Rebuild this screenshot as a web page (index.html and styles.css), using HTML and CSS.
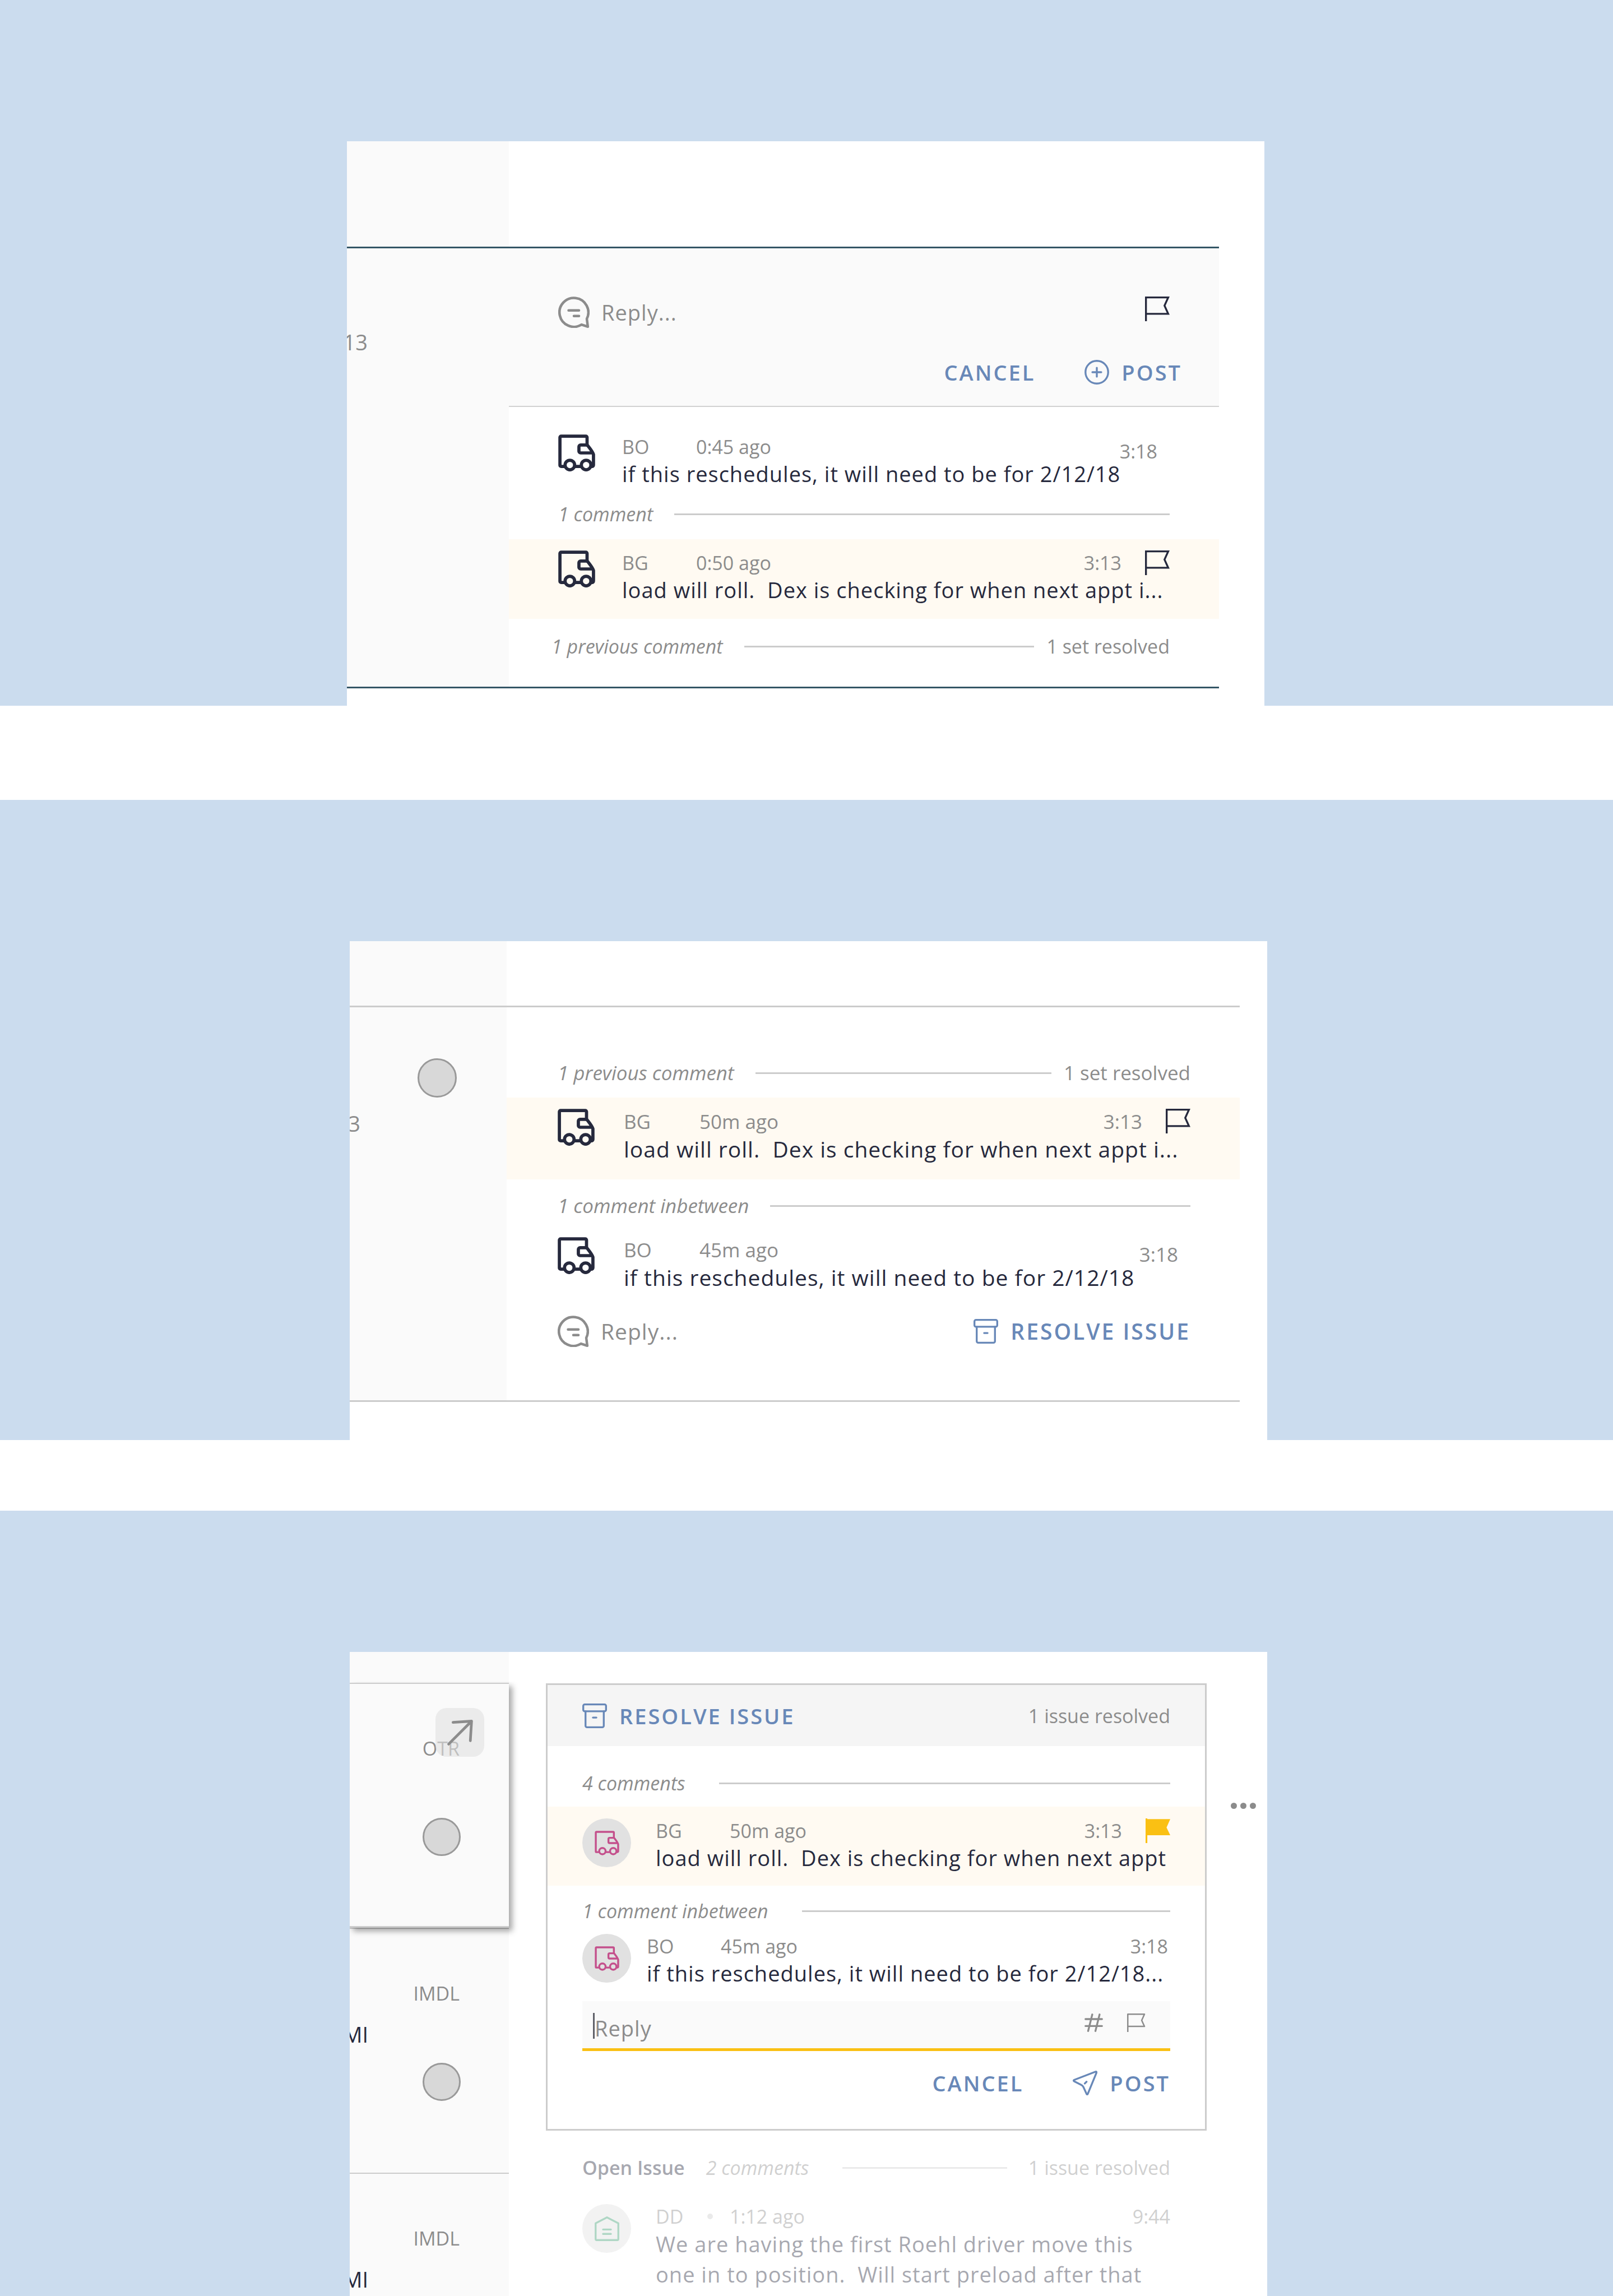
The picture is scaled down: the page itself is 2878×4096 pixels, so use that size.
FILE: index.html
```html
<!DOCTYPE html>
<html lang="en">
<head>
<meta charset="utf-8">
<meta name="viewport" content="width=device-width, initial-scale=1">
<title>Load comments</title>
<link rel="stylesheet" href="styles.css">
</head>
<body>

<svg class="sprite" aria-hidden="true">
  <symbol id="truck" viewBox="0 0 75 75">
    <path d="M11 65H6a2.5 2.5 0 0 1-2.500-2.500V6A2.500 2.500 0 0 1 6 3.500h50A2.500 2.500 0 0 1 58.500 6v16M36 65h8M59 21.500H45.500a3.500 3.500 0 0 0-3.500 3.500v9a3.500 3.500 0 0 0 3.500 3.500H70M59 21.500C63 27 69 33.500 71.500 40.500V62a3 3 0 0 1-3 3"/>
    <circle cx="23.600" cy="62" r="9.700"/><circle cx="56.600" cy="62" r="9.700"/>
  </symbol>
  <symbol id="flag" viewBox="0 0 50 50"><path d="M1.900 50V1.900H47L39.500 18.500 47 35H1.900"/></symbol>
  <symbol id="bubble" viewBox="0 0 62 62">
    <path d="M46 55.500A28.500 28.500 0 1 1 56.500 44L58.500 59.500Z"/>
    <path d="M20.500 27.500h20.500M31 38.500h10"/>
  </symbol>
  <symbol id="plus" viewBox="0 0 50 50"><circle cx="25" cy="25" r="23"/><path d="M25 16v18M16 25h18"/></symbol>
  <symbol id="archive" viewBox="0 0 50 50">
    <rect x="1.900" y="1.900" width="46.200" height="13.800" rx="3"/>
    <path d="M6.500 15.700v29.400a3 3 0 0 0 3 3h31a3 3 0 0 0 3-3V15.700M21.500 28.500h7"/>
  </symbol>
  <symbol id="hash" viewBox="0 0 38 38"><path d="M2 11.500h34M2 25.700h34M16 2 7.500 36M31 2 22.500 36"/></symbol>
  <symbol id="send" viewBox="0 0 50 50">
    <path d="M46.500 2 3 18.800q-2.500 1.400 0 2.800L17.500 29q3 1.500 4.200 4.200L28 47q1.300 2.400 2.600 0L48.200 4q.5-2.500-1.700-2ZM24.500 26l3.500-3.500"/>
  </symbol>
  <symbol id="house" viewBox="0 0 50 50"><path d="M25 2 48 14V46a2 2 0 0 1-2 2H4a2 2 0 0 1-2-2V14ZM17 26.500h16M17 35.500h16"/></symbol>
  <symbol id="arrow" viewBox="0 0 100 100"><path d="M27 74 74 27M36 29.500 74 27 71.500 67"/></symbol>
</svg>

<main class="page">

  <!-- Composing a reply -->
  <section class="stage stage--compose">
    <div class="card">
      <div class="card__head"><div class="card__gutter"></div></div>
      <article class="load load--active">
        <div class="load__side"><span class="clip clip--stop">13</span></div>
        <div class="load__main">
          <form class="compose">
            <div class="reply">
              <svg class="icon icon--bubble"><use href="#bubble"/></svg>
              <input class="reply__input" type="text" placeholder="Reply..." aria-label="Reply">
              <button class="icon-button" type="button" aria-label="Flag"><svg class="icon icon--flag"><use href="#flag"/></svg></button>
            </div>
            <div class="actions">
              <button class="action" type="button">CANCEL</button>
              <button class="action" type="submit"><svg class="icon icon--action"><use href="#plus"/></svg>POST</button>
            </div>
          </form>
          <div class="thread">
            <div class="comment">
              <svg class="icon icon--truck"><use href="#truck"/></svg>
              <div class="comment__body">
                <p class="meta"><span class="meta__who">BO</span><span>0:45 ago</span></p>
                <p class="text">if this reschedules, it will need to be for 2/12/18</p>
              </div>
              <time class="comment__time">3:18</time>
            </div>
            <div class="divider"><em>1 comment</em><hr class="rule"></div>
            <div class="comment comment--flagged">
              <svg class="icon icon--truck"><use href="#truck"/></svg>
              <div class="comment__body">
                <p class="meta"><span class="meta__who">BG</span><span>0:50 ago</span><time class="meta__time">3:13</time><svg class="icon icon--flag"><use href="#flag"/></svg></p>
                <p class="text">load will roll.  Dex is checking for when next appt i...</p>
              </div>
            </div>
            <div class="divider divider--summary"><em>1 previous comment</em><hr class="rule"><span>1 set resolved</span></div>
          </div>
        </div>
      </article>
    </div>
  </section>

  <!-- Collapsed thread with resolve action -->
  <section class="stage stage--thread">
    <div class="card">
      <div class="card__head"><div class="card__gutter"></div></div>
      <article class="load">
        <div class="load__side"><span class="dot"></span><span class="clip clip--digit">3</span></div>
        <div class="load__main">
          <div class="thread">
            <div class="divider"><em>1 previous comment</em><hr class="rule"><span>1 set resolved</span></div>
            <div class="comment comment--flagged">
              <svg class="icon icon--truck"><use href="#truck"/></svg>
              <div class="comment__body">
                <p class="meta"><span class="meta__who">BG</span><span>50m ago</span><time class="meta__time">3:13</time><svg class="icon icon--flag"><use href="#flag"/></svg></p>
                <p class="text">load will roll.  Dex is checking for when next appt i...</p>
              </div>
            </div>
            <div class="divider"><em>1 comment inbetween</em><hr class="rule"></div>
            <div class="comment">
              <svg class="icon icon--truck"><use href="#truck"/></svg>
              <div class="comment__body">
                <p class="meta"><span class="meta__who">BO</span><span>45m ago</span></p>
                <p class="text">if this reschedules, it will need to be for 2/12/18</p>
              </div>
              <time class="comment__time">3:18</time>
            </div>
            <div class="reply">
              <svg class="icon icon--bubble"><use href="#bubble"/></svg>
              <input class="reply__input" type="text" placeholder="Reply..." aria-label="Reply">
              <button class="action" type="button"><svg class="icon icon--action"><use href="#archive"/></svg>RESOLVE ISSUE</button>
            </div>
          </div>
        </div>
      </article>
    </div>
  </section>

  <!-- Selected load with its open issue -->
  <section class="stage stage--issue">
    <div class="card card--split">
      <aside class="loads">
        <div class="stop stop--selected">
          <span class="stop__mode">OTR</span>
          <span class="dot stop__dot"></span>
          <button class="expand" type="button" aria-label="Open load"><svg class="icon expand__icon"><use href="#arrow"/></svg></button>
        </div>
        <div class="stop">
          <span class="stop__mode">IMDL</span>
          <span class="clip clip--city">MI</span>
          <span class="dot stop__dot"></span>
        </div>
        <div class="stop">
          <span class="stop__mode">IMDL</span>
          <span class="clip clip--city">MI</span>
        </div>
      </aside>
      <div class="issues">
        <article class="issue">
          <header class="issue__head">
            <button class="action" type="button"><svg class="icon icon--action"><use href="#archive"/></svg>RESOLVE ISSUE</button>
            <span>1 issue resolved</span>
          </header>
          <div class="divider"><em>4 comments</em><hr class="rule"></div>
          <div class="comment comment--flagged">
            <span class="avatar"><svg class="icon"><use href="#truck"/></svg></span>
            <div class="comment__body">
              <p class="meta"><span class="meta__who">BG</span><span>50m ago</span><time class="meta__time">3:13</time><svg class="icon icon--flag icon--filled" viewBox="0 0 50 50"><path d="M0 0h3.500v1.500H50L42.500 18.500 50 34H3.500v16H0z"/></svg></p>
              <p class="text">load will roll.  Dex is checking for when next appt</p>
            </div>
          </div>
          <div class="divider"><em>1 comment inbetween</em><hr class="rule"></div>
          <div class="comment comment--near">
            <span class="avatar"><svg class="icon"><use href="#truck"/></svg></span>
            <div class="comment__body">
              <p class="meta"><span class="meta__who">BO</span><span>45m ago</span><time class="meta__time">3:18</time></p>
              <p class="text">if this reschedules, it will need to be for 2/12/18...</p>
            </div>
          </div>
          <form class="editor">
            <div class="field">
              <span class="field__caret"></span>
              <input class="reply__input" type="text" placeholder="Reply" aria-label="Reply">
              <span class="field__tools">
                <button class="icon-button" type="button" aria-label="Add reference"><svg class="icon icon--tool"><use href="#hash"/></svg></button>
                <button class="icon-button" type="button" aria-label="Flag"><svg class="icon icon--tool"><use href="#flag"/></svg></button>
              </span>
            </div>
            <div class="actions">
              <button class="action" type="button">CANCEL</button>
              <button class="action" type="submit"><svg class="icon icon--action"><use href="#send"/></svg>POST</button>
            </div>
          </form>
        </article>
        <article class="open-issue">
          <div class="divider"><strong>Open Issue</strong><em>2 comments</em><hr class="rule"><span>1 issue resolved</span></div>
          <div class="comment">
            <span class="avatar avatar--yard"><svg class="icon"><use href="#house"/></svg></span>
            <div class="comment__body">
              <p class="meta"><span class="meta__who meta__who--dotted">DD</span><span>1:12 ago</span><time class="meta__time">9:44</time></p>
              <p class="text">We are having the first Roehl driver move this
one in to position.  Will start preload after that</p>
            </div>
          </div>
        </article>
      </div>
      <button class="more" type="button" aria-label="More"><span class="more__dot"></span><span class="more__dot"></span><span class="more__dot"></span></button>
    </div>
  </section>

</main>
</body>
</html>
```
FILE: styles.css
```css
:root {
  --sky: #cbdcee;
  --ink: #26293d;
  --muted: #8c8c8c;
  --line: #cccccc;
  --panel: #fafafa;
  --cream: #fffaf2;
  --link: #6888b8;
  --teal: #345666;
  --amber: #fac013;
  --text-size: 38px;
  --meta-line: 44px;
  --who: 132px;
  --inset-left: 88px;
  --inset: 88px;
}

* { box-sizing: border-box; }

body {
  margin: 0;
  background: #ffffff;
  color: var(--muted);
  font-family: "Open Sans", "Noto Sans", sans-serif;
  font-size: 34px;
  line-height: 44px;
}

p { margin: 0; }
time, em, strong, span { white-space: nowrap; }

button, input {
  margin: 0;
  padding: 0;
  border: 0;
  background: none;
  color: inherit;
  font: inherit;
}

.sprite { display: none; }

.icon {
  flex: none;
  display: block;
  fill: none;
  stroke: currentColor;
  stroke-width: 3.8;
  stroke-linecap: round;
  stroke-linejoin: round;
}
.icon--bubble { width: 56px; height: 56px; stroke-width: 5; }
.icon--flag { width: 44px; height: 44px; color: var(--ink); stroke-linecap: butt; stroke-linejoin: miter; }
.icon--filled { color: var(--amber); fill: currentColor; stroke: none; }
.icon--action { width: 44px; height: 44px; }
.icon--truck { width: 66px; height: 66px; color: var(--ink); stroke-width: 6.5; }
.icon--tool { width: 33px; height: 33px; stroke-width: 3.8; }
.icon-button { flex: none; }

/* Stages */
.page {
  display: flex;
  flex-direction: column;
  min-height: 100vh;
}
.stage {
  display: grid;
  grid-template-columns: 624fr 1637fr 617fr;
  padding-top: 252px;
  background: var(--sky);
}
.stage--compose { grid-template-columns: 619fr 1637fr 622fr; margin-bottom: 168px; }
.stage--thread {
  margin-bottom: 126px;
  --text-size: 39px;
  --meta-line: 46px;
  --who: 135px;
  --inset-left: 91px;
  font-size: 35px;
}
.stage--issue { flex: 1; }

.card {
  grid-column: 2;
  min-width: 0;
  background: #ffffff;
}
.stage--compose .card { --side: 289px; padding-bottom: 31px; }
.stage--thread .card { --side: 280px; padding-bottom: 68px; }
.card__gutter { width: var(--side); background: var(--panel); }
.stage--compose .card__gutter { height: 188px; }
.stage--thread .card__gutter { height: 115px; }

/* Load row */
.load {
  display: grid;
  grid-template-columns: var(--side) 1fr;
  margin-right: 49px;
  border-top: 3px solid var(--line);
  border-bottom: 3px solid var(--line);
}
.load--active { margin-right: 81px; border-color: var(--teal); }
.load__side { background: var(--panel); font-size: var(--text-size); line-height: 52px; }
.stage--compose .load__side { padding-top: 141px; }
.stage--thread .load__side { display: flex; flex-direction: column; gap: 20px; padding-top: 91px; }
.load__main { min-width: 0; }

.dot {
  display: block;
  width: 70px;
  height: 70px;
  border: 3px solid #999999;
  border-radius: 50%;
  background: #d8d8d8;
}
.stage--thread .dot { align-self: flex-end; margin-right: 89px; }

/* Text running out from under the left edge */
.clip {
  display: flex;
  justify-content: flex-end;
  overflow: hidden;
}
.clip--stop { width: 37px; }
.clip--digit { width: 19px; }
.clip--city { width: 33px; }

/* Composer */
.compose {
  padding: 86px 0 34px;
  border-bottom: 2px solid #d2d2d2;
  background: var(--panel);
}
.reply {
  display: flex;
  align-items: center;
  gap: 21px;
  padding: 0 var(--inset) 0 var(--inset-left);
}
.compose .icon-button { align-self: flex-start; }
.stage--thread .reply { margin-top: 42px; }
.reply__input {
  flex: 1;
  min-width: 0;
  height: 52px;
  font-size: var(--text-size);
  letter-spacing: 1px;
  line-height: 52px;
  outline: none;
}
.reply__input::placeholder { color: var(--muted); opacity: 1; }

.actions {
  display: flex;
  justify-content: flex-end;
  gap: 88px;
}
.compose .actions { margin-top: 53px; padding-right: 66px; }
.action {
  display: flex;
  align-items: center;
  gap: 22px;
  color: var(--link);
  font-size: var(--text-size);
  font-weight: 600;
  letter-spacing: 3px;
  line-height: 52px;
  white-space: nowrap;
}

/* Threads */
.stage--compose .thread { padding: 49px 0 50px; }
.stage--thread .thread { padding: 94px 0 95px; }

.divider {
  display: flex;
  align-items: center;
  gap: 22px;
  padding: 0 var(--inset) 0 var(--inset-left);
  line-height: var(--meta-line);
}
.divider em { margin-right: 16px; }
.divider--summary { padding-left: 76px; }
.rule {
  flex: 1;
  height: 3px;
  margin: 0;
  border: 0;
  background: var(--line);
}
.comment {
  display: flex;
  gap: 48px;
  padding: 0 var(--inset) 0 var(--inset-left);
}
.comment__body { flex: 1; min-width: 0; }
.comment__time { align-self: flex-start; padding: 8px 22px 0 0; line-height: var(--meta-line); }
.comment--flagged { margin: 20px 0 24px; padding-top: 20px; padding-bottom: 26px; background: var(--cream); }
.stage--compose .comment--flagged { margin: 23px 0 27px; }
.stage--thread .comment--flagged { margin-top: 21px; padding-bottom: 28px; }
.meta {
  display: flex;
  height: var(--meta-line);
  line-height: var(--meta-line);
}
.meta__who { width: var(--who); }
.meta__time { margin-left: auto; }
.meta__time + .icon { margin-left: 42px; }
.text {
  color: var(--ink);
  font-size: var(--text-size);
  letter-spacing: 1px;
  line-height: 52px;
  white-space: pre;
}
.stage--compose .comment:not(.comment--flagged) + .divider { margin-top: 24px; }
.stage--thread .comment { gap: 52px; }
.stage--thread .divider + .comment:not(.comment--flagged) { margin-top: 33px; }

/* Loads column */
.card--split {
  display: grid;
  grid-template-columns: 284px 1fr 108px;
  --inset: 62px;
  --inset-left: 62px;
}
.loads { padding-top: 55px; background: var(--panel); }
.stop {
  position: relative;
  display: grid;
  grid-template-rows: 44px 52px 68px;
  row-gap: 25px;
  height: 437px;
  padding-top: 93px;
  border-top: 2px solid var(--line);
}
.stop:last-child { height: auto; grid-template-rows: 44px 52px; }
.stop--selected {
  z-index: 1;
  border-bottom: 3px solid var(--line);
  background: var(--panel);
  box-shadow: 6px 6px 10px rgba(0, 0, 0, 0.35);
  clip-path: inset(-2px -24px -24px 0);
}
.stop__mode { grid-row: 1; justify-self: end; margin-right: 88px; }
.clip--city {
  grid-row: 2;
  color: var(--ink);
  font-size: var(--text-size);
  line-height: 52px;
}
.stop__dot {
  grid-row: 3;
  justify-self: end;
  width: 68px;
  height: 68px;
  margin-right: 86px;
}
.expand {
  position: absolute;
  top: 43px;
  right: 44px;
  width: 87px;
  height: 87px;
  border-radius: 20px;
  background: rgba(225, 225, 225, 0.6);
}
.expand__icon { width: 87px; height: 87px; stroke-width: 5.5; }

/* Issue panel */
.issues { padding: 56px 0 0 66px; min-width: 0; }
.issue { border: 3px solid var(--line); padding-bottom: 56px; }
.issue__head {
  display: flex;
  align-items: center;
  justify-content: space-between;
  height: 109px;
  margin-bottom: 44px;
  padding: 0 var(--inset);
  background: #f5f5f5;
}
.issues .divider em { margin-right: 38px; }
.issues .comment { gap: 44px; }
.issues .comment--flagged { margin-bottom: 23px; padding-top: 21px; padding-bottom: 24px; }
.issues .comment--near { gap: 28px; margin: 19px 0 24px; padding-right: 66px; }
.avatar {
  flex: none;
  display: grid;
  place-items: center;
  width: 87px;
  height: 87px;
  border-radius: 50%;
  background: #e1e1e1;
  color: #c4508c;
}
.avatar .icon { width: 44px; height: 44px; stroke-width: 5.8; }
.avatar--yard { color: #3a9c70; }
.avatar--yard .icon { stroke-width: 3.8; }
.issues .comment--flagged + .divider { margin-top: 23px; }

.editor { padding: 0 var(--inset); }
.field {
  display: flex;
  align-items: center;
  padding: 21px 44px 9px 19px;
  border-bottom: 5px solid var(--amber);
  background: var(--panel);
}
.field__caret { width: 3px; height: 46px; margin-bottom: 8px; background: #5f6068; }
.field__tools { display: flex; gap: 43px; padding-bottom: 20px; }
.editor .actions { margin-top: 31px; }

.open-issue { padding: 44px 3px 0; opacity: 0.4; }
.open-issue .comment { margin-top: 43px; }
.open-issue .divider { gap: 38px; }
.open-issue .divider em { margin-right: 22px; }
.open-issue .text { line-height: 54px; }
.divider strong { color: var(--ink); font-weight: 600; }
.meta__who--dotted {
  display: flex;
  align-items: center;
  justify-content: space-between;
  padding-right: 30px;
}
.meta__who--dotted::after {
  content: "";
  width: 10px;
  height: 10px;
  border-radius: 50%;
  background: var(--line);
}

.more {
  display: flex;
  gap: 6px;
  align-self: start;
  margin: 269px 0 0 43px;
}
.more__dot { width: 11px; height: 11px; border-radius: 50%; background: var(--muted); }
```
